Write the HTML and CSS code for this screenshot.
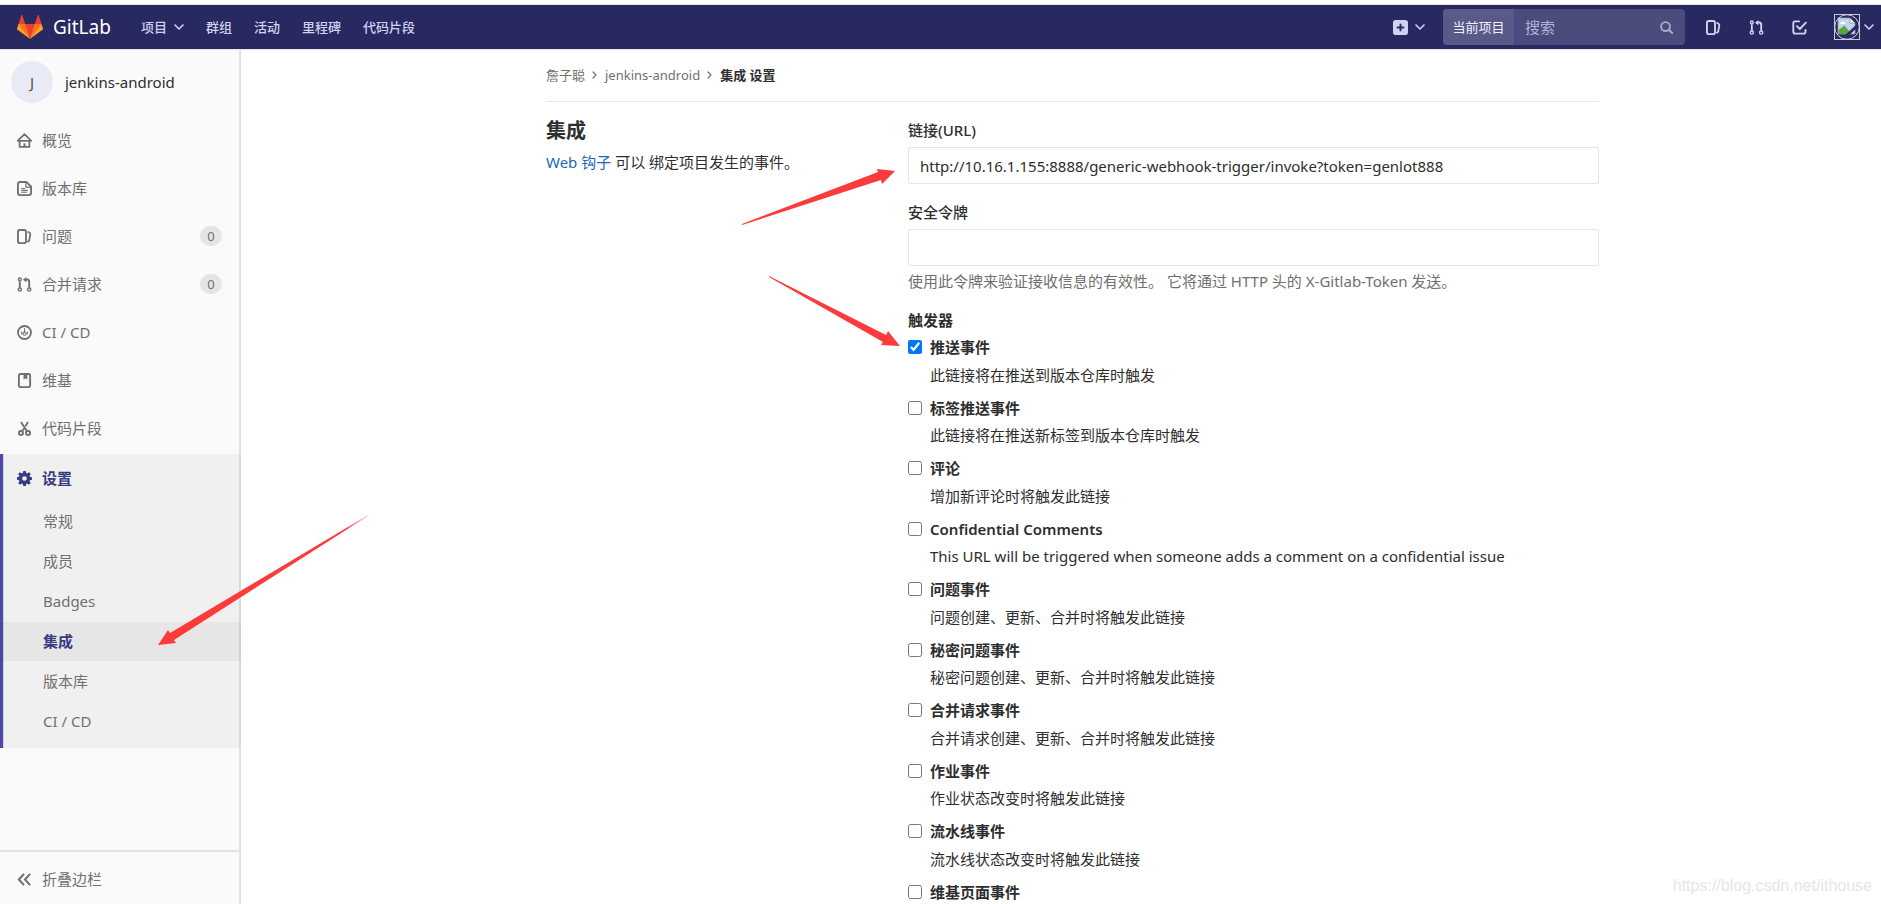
FILE: index.html
```html
<!DOCTYPE html>
<html lang="zh-CN">
<head>
<meta charset="utf-8">
<title>集成 设置 · jenkins-android · GitLab</title>
<link rel="stylesheet" href="styles.css">
</head>
<body>
<svg class="sprite" aria-hidden="true">
  <symbol id="chevron-down" viewBox="0 0 10 10"><path d="M1 3l4 4 4-4" fill="none" stroke="currentColor" stroke-width="1.6" stroke-linecap="round" stroke-linejoin="round"/></symbol>
  <symbol id="chevron-right" viewBox="0 0 10 10"><path d="M3 2l3 3-3 3" fill="none" stroke="currentColor" stroke-width="1.2" stroke-linecap="round" stroke-linejoin="round"/></symbol>
  <symbol id="issues" viewBox="0 0 16 16"><rect x="1" y="1" width="8.6" height="14" rx="2" fill="none" stroke="currentColor" stroke-width="2"/><path d="M12 3.2l1.3.7q1 .6.9 1.8l-1.200 6.600q-.2 1.100-1.400 1.200" fill="none" stroke="currentColor" stroke-width="1.900" stroke-linecap="round"/></symbol>
  <symbol id="merge" viewBox="0 0 16 16"><g fill="none" stroke="currentColor" stroke-width="1.500"><circle cx="3" cy="2.600" r="1.500"/><circle cx="3" cy="13.400" r="1.700"/><circle cx="13" cy="13.400" r="1.700"/></g><path d="M3 4.500v7M13 11.500V5q0-2.300-2.300-2.300H9" fill="none" stroke="currentColor" stroke-width="2"/><path d="M10 0v5.600L6.300 2.800z" fill="currentColor"/></symbol>
</svg>
<header class="navbar">
  <a class="brand" href="#">
    <svg class="logo" viewBox="0 0 36 36" aria-hidden="true"><path fill="#e24329" d="M2 14l9.38 9v-9l-4-12.28c-.205-.632-1.176-.632-1.38 0zM34 14l-9.38 9v-9l4-12.28c.205-.632 1.176-.632 1.38 0zM18 34.38L3 14h30z"/><path fill="#fc6d26" d="M18 34.38L11.38 14H2l4 11zM18 34.38L24.62 14H34l-4 11z"/><path fill="#fca326" d="M2 14L.1 20.16c-.18.565 0 1.2.5 1.56L18 34.38zM34 14l1.9 6.16c.18.565 0 1.2-.5 1.56L18 34.38z"/></svg>
    <span>GitLab</span>
  </a>
  <nav class="nav-links">
    <a href="#">项目 <svg class="chev"><use href="#chevron-down"/></svg></a>
    <a href="#">群组</a><a href="#">活动</a><a href="#">里程碑</a><a href="#">代码片段</a>
  </nav>
  <div class="nav-tools">
    <button class="tool" aria-label="新建"><svg class="icon" viewBox="0 0 16 16"><path fill="currentColor" fill-rule="evenodd" d="M3 0h10a3 3 0 0 1 3 3v10a3 3 0 0 1-3 3H3a3 3 0 0 1-3-3V3a3 3 0 0 1 3-3zm4 4v3H4v2h3v3h2V9h3V7H9V4z"/></svg><svg class="chev"><use href="#chevron-down"/></svg></button>
    <form class="search">
      <label for="search">当前项目</label>
      <input id="search" type="text" placeholder="搜索">
      <svg class="glass" viewBox="0 0 14 14"><circle cx="6" cy="6" r="4.8" fill="none" stroke="currentColor" stroke-width="2"/><path d="M9.500 9.500L13 13" stroke="currentColor" stroke-width="2.200" stroke-linecap="round"/></svg>
    </form>
    <div class="shortcuts">
      <a href="#" aria-label="问题"><svg class="icon"><use href="#issues"/></svg></a>
      <a href="#" aria-label="合并请求"><svg class="icon"><use href="#merge"/></svg></a>
      <a href="#" aria-label="待办"><svg class="icon" viewBox="0 0 16 16"><g fill="none" stroke="currentColor" stroke-width="2" stroke-linecap="round" stroke-linejoin="round"><path d="M7.500 1.500H3.400Q1.400 1.500 1.400 3.500v9q0 2 2 2h9q2 0 2-2v-2"/><path d="M5.300 6.600l3 3 6.500-6.800"/></g></svg></a>
    </div>
    <button class="tool user" aria-label="用户"><svg class="avatar-img" viewBox="0 0 26 26"><rect x=".5" y=".5" width="25" height="25" fill="none" stroke="#c8c8c8"/><path d="M4 4h12l5 5v11H4z" fill="#c2d4f4" stroke="#999" stroke-width=".8"/><path d="M4.500 20v-4l6-4.500 7 8.500z" fill="#57a837"/><path d="M6 10q1-3 3-2 2-1 2.500 2z" fill="#fff"/><path d="M16 4v5h5z" fill="#fff" stroke="#888" stroke-width=".7"/><path d="M11 21L22 11v4l-7 6z" fill="#292961"/><circle cx="13" cy="13" r="12.300" fill="none" stroke="#d1d1f0"/></svg><svg class="chev"><use href="#chevron-down"/></svg></button>
  </div>
</header>
<div class="layout">
  <aside class="sidebar">
    <a class="project" href="#"><span class="identicon">J</span><span>jenkins-android</span></a>
    <ul class="menu">
      <li><a href="#"><svg class="icon" viewBox="0 0 16 16"><g fill="none" stroke="currentColor" stroke-width="1.900" stroke-linejoin="round"><path d="M.8 8.300h14.400L8 1.200z"/><path d="M2.800 8.500v6.300h10.400V8.500"/><path d="M8 11v4" stroke-width="2.200"/></g></svg>概览</a></li>
      <li><a href="#"><svg class="icon" viewBox="0 0 16 16"><path d="M3.500 1H10l5 5v6.500q0 2.500-2.500 2.500h-9Q1 15 1 12.500v-9Q1 1 3.500 1z" fill="none" stroke="currentColor" stroke-width="2"/><path d="M9.500 1v5.500H15M4.500 8h4M4.500 10h7M4.500 12h6" fill="none" stroke="currentColor" stroke-width="1.200"/></svg>版本库</a></li>
      <li><a href="#"><svg class="icon"><use href="#issues"/></svg>问题<span class="count">0</span></a></li>
      <li><a href="#"><svg class="icon"><use href="#merge"/></svg>合并请求<span class="count">0</span></a></li>
      <li><a href="#"><svg class="icon" viewBox="0 0 16 16"><circle cx="8" cy="8" r="6.900" fill="none" stroke="currentColor" stroke-width="2"/><circle cx="8" cy="9.300" r="1.600" fill="none" stroke="currentColor" stroke-width="1.200"/><path d="M8 3.500V8M5 7v3M11 7v3" stroke="currentColor" stroke-width="1.200"/></svg>CI / CD</a></li>
      <li><a href="#"><svg class="icon" viewBox="0 0 16 16"><rect x="2" y="1" width="12" height="14" rx="2" fill="none" stroke="currentColor" stroke-width="2"/><path d="M7 1h4v6L9 5.500 7 7z" fill="currentColor"/></svg>维基</a></li>
      <li><a href="#"><svg class="icon" viewBox="0 0 16 16"><g fill="none" stroke="currentColor" stroke-width="2"><circle cx="4.200" cy="12.800" r="2.200"/><circle cx="11.800" cy="12.800" r="2.200"/><path d="M4.200 1l6.500 10M11.800 1L9 5.500M7.500 8L5.400 11"/></g></svg>代码片段</a></li>
    </ul>
    <div class="active-group">
      <a class="group-title" href="#"><svg class="icon" viewBox="0 0 16 16"><path fill="currentColor" fill-rule="evenodd" d="M6.700 0h2.600l.5 2.200 1 .4 2-1.300 1.900 1.900-1.300 2 .4 1 2.200.5v2.600l-2.200.5-.4 1 1.300 2-1.900 1.900-2-1.300-1 .4-.5 2.200H6.700l-.5-2.200-1-.4-2 1.300-1.900-1.900 1.300-2-.4-1L0 9.300V6.700l2.200-.5.4-1-1.300-2 1.900-1.900 2 1.300 1-.4zM8 5.500a2.500 2.500 0 1 0 0 5 2.500 2.500 0 0 0 0-5z"/></svg>设置</a>
      <ul class="submenu">
        <li><a href="#">常规</a></li><li><a href="#">成员</a></li><li><a href="#">Badges</a></li>
        <li><a class="current" href="#">集成</a></li><li><a href="#">版本库</a></li><li><a href="#">CI / CD</a></li>
      </ul>
    </div>
    <button class="collapse"><svg class="icon" viewBox="0 0 16 16"><path d="M7.500 2L2 8l5.500 6M14 2L8.500 8l5.500 6" fill="none" stroke="currentColor" stroke-width="2.200"/></svg>折叠边栏</button>
  </aside>
  <main class="main">
    <div class="container">
      <nav class="crumbs"><a href="#">詹子聪</a><svg class="sep"><use href="#chevron-right"/></svg><a href="#">jenkins-android</a><svg class="sep"><use href="#chevron-right"/></svg><strong>集成 设置</strong></nav>
      <div class="columns">
        <section>
          <h1>集成</h1>
          <p class="intro"><a href="#">Web 钩子</a> 可以 绑定项目发生的事件。</p>
        </section>
        <form class="hook">
          <div class="field"><label for="url">链接(URL)</label><input id="url" type="text" value="http://10.16.1.155:8888/generic-webhook-trigger/invoke?token=genlot888"></div>
          <div class="field"><label for="token">安全令牌</label><input id="token" type="text"><p class="help">使用此令牌来验证接收信息的有效性。 它将通过 HTTP 头的 X-Gitlab-Token 发送。</p></div>
          <fieldset>
            <legend>触发器</legend>
            <div class="trigger"><input type="checkbox" id="t1" checked><label for="t1">推送事件</label><p>此链接将在推送到版本仓库时触发</p></div>
            <div class="trigger"><input type="checkbox" id="t2"><label for="t2">标签推送事件</label><p>此链接将在推送新标签到版本仓库时触发</p></div>
            <div class="trigger"><input type="checkbox" id="t3"><label for="t3">评论</label><p>增加新评论时将触发此链接</p></div>
            <div class="trigger"><input type="checkbox" id="t4"><label for="t4">Confidential Comments</label><p>This URL will be triggered when someone adds a comment on a confidential issue</p></div>
            <div class="trigger"><input type="checkbox" id="t5"><label for="t5">问题事件</label><p>问题创建、更新、合并时将触发此链接</p></div>
            <div class="trigger"><input type="checkbox" id="t6"><label for="t6">秘密问题事件</label><p>秘密问题创建、更新、合并时将触发此链接</p></div>
            <div class="trigger"><input type="checkbox" id="t7"><label for="t7">合并请求事件</label><p>合并请求创建、更新、合并时将触发此链接</p></div>
            <div class="trigger"><input type="checkbox" id="t8"><label for="t8">作业事件</label><p>作业状态改变时将触发此链接</p></div>
            <div class="trigger"><input type="checkbox" id="t9"><label for="t9">流水线事件</label><p>流水线状态改变时将触发此链接</p></div>
            <div class="trigger"><input type="checkbox" id="t10"><label for="t10">维基页面事件</label></div>
          </fieldset>
        </form>
      </div>
    </div>
  </main>
</div>
<svg class="arrows" width="910" height="660" aria-hidden="true">
  <defs><linearGradient id="fade" gradientUnits="userSpaceOnUse" x1="367" y1="516" x2="345" y2="530"><stop offset="0" stop-color="#fc3b3a" stop-opacity="0.3"/><stop offset="1" stop-color="#fc3b3a"/></linearGradient></defs>
  <path fill="#fc3b3a" d="M742 224L878 172 877 169 895 171 882 184 881 180 742 225z"/>
  <path fill="#fc3b3a" d="M769 276L886 335 888 331 900 346 881 345 883 342 769 277z"/>
  <path fill="url(#fade)" d="M368 515L170 633 168 630 158 645 176 643 174 640 368 516z"/>
</svg>
<div class="watermark">https://blog.csdn.net/ithouse</div>
</body>
</html>
```
FILE: styles.css
```css
* { box-sizing: border-box; }
body {
  margin: 0;
  padding-top: 4px;
  height: 100vh;
  display: flex;
  flex-direction: column;
  overflow: hidden;
  position: relative;
  background: #fff;
  color: #2e2e2e;
  font: 15px/22px "Noto Sans", "Noto Sans CJK SC", sans-serif;
}
a { color: inherit; text-decoration: none; }
ul { list-style: none; margin: 0; padding: 0; }
p, h1 { margin: 0; }
button { border: 0; background: none; padding: 0; font: inherit; color: inherit; }
svg { flex: none; }
.sprite { position: absolute; width: 0; height: 0; }
.icon { width: 15px; height: 15px; }
.chev { width: 10px; height: 10px; }

.navbar {
  flex: none;
  height: 46px;
  display: flex;
  align-items: center;
  padding: 0 7px 0 17px;
  background: #292961;
  color: #d1d1f0;
  border-top: 1px solid #e5e5e5;
  border-bottom: 1px solid #e5e5e5;
}
.brand { display: flex; align-items: center; gap: 10px; color: #fff; font-size: 19px; }
.logo { width: 26px; height: 26px; }
.nav-links { display: flex; gap: 22px; margin-left: 30px; font-size: 13px; font-weight: 500; }
.nav-links a { display: flex; align-items: center; gap: 7px; }
.nav-tools { margin-left: auto; display: flex; align-items: center; }
.tool { display: flex; align-items: center; gap: 7px; }
.search {
  display: flex;
  align-items: center;
  width: 242px;
  height: 36px;
  margin: 0 21px 0 18px;
  padding-right: 12px;
  border-radius: 4px;
  overflow: hidden;
  background: #4c4c7c;
}
.search label {
  align-self: stretch;
  width: 72px;
  display: flex;
  align-items: center;
  justify-content: center;
  background: #5a5a88;
  border-right: 1px solid #41419f;
  color: #f0f0fa;
  font-size: 13px;
}
.search input { flex: 1; min-width: 0; border: 0; background: none; padding: 0 10px; font: inherit; color: #fff; }
.search input::placeholder { color: #b0b0d8; opacity: 1; }
.glass { width: 13px; height: 13px; color: #a9a9c9; }
.shortcuts { display: flex; gap: 28px; }
.shortcuts a { display: flex; }
.user { margin-left: 27px; gap: 4px; }
.avatar-img { width: 26px; height: 26px; }

.layout { flex: 1; min-height: 0; display: flex; }
.sidebar {
  width: 241px;
  flex: none;
  display: flex;
  flex-direction: column;
  background: #fafafa;
  color: #707070;
  box-shadow: inset -2px 0 0 #e2e2e2;
}
.project { display: flex; align-items: center; gap: 12px; padding: 11px; color: #2e2e2e; }
.identicon {
  width: 42px;
  height: 42px;
  border-radius: 50%;
  display: flex;
  align-items: center;
  justify-content: center;
  background: #e8eaf6;
  color: #555;
}
.menu a, .group-title { display: flex; align-items: center; gap: 10px; height: 48px; padding: 0 19px 0 17px; }
.menu { padding: 2px 0; }
.count {
  margin-left: auto;
  width: 22px;
  border-radius: 10px;
  background: #e5e5e5;
  text-align: center;
  font-size: 13px;
  line-height: 20px;
}
.active-group { background: rgba(0, 0, 0, 0.04); box-shadow: inset 3px 0 0 #4b4ba3, inset 4px 0 0 #d2d2ea; padding-bottom: 7px; }
.group-title { color: #393982; font-weight: 600; }
.submenu { display: grid; gap: 1px; }
.submenu a { display: block; padding-left: 43px; line-height: 39px; }
.submenu .current { background: rgba(0, 0, 0, 0.04); color: #393982; font-weight: 600; }
.collapse {
  margin-top: auto;
  height: 54px;
  display: flex;
  align-items: center;
  gap: 10px;
  padding: 2px 0 0 17px;
  border-top: 2px solid #e2e2e2;
}

.main { flex: 1; min-width: 0; overflow: hidden; padding-left: 23px; }
.container { max-width: 1053px; margin: 0 auto; }
.crumbs {
  display: flex;
  align-items: center;
  gap: 5px;
  height: 52px;
  padding-bottom: 2px;
  border-bottom: 1px solid #e5e5e5;
  font-size: 13px;
  color: #707070;
}
.crumbs strong { color: #2e2e2e; font-weight: 600; }
.sep { width: 10px; height: 10px; }
.columns { display: grid; grid-template-columns: 362px 1fr; padding-top: 17px; }
h1 { font-size: 20px; line-height: 24px; font-weight: 600; }
.intro { margin-top: 8px; }
.intro a { color: #1b69b6; }
.field { margin-bottom: 17px; }
.field label { display: block; margin-bottom: 6px; font-weight: 500; }
.field input {
  display: block;
  width: 100%;
  height: 37px;
  padding: 0 11px;
  border: 1px solid #e5e5e5;
  border-radius: 2px;
  background: #fff;
  color: #2e2e2e;
  font: inherit;
}
.help { margin-top: 4px; color: #707070; }
fieldset { border: 0; margin: 0; padding: 0; }
legend { padding: 0; margin-bottom: 5px; font-weight: 600; }
.trigger { display: grid; grid-template-columns: 22px 1fr; align-items: center; row-gap: 5px; margin-bottom: 11px; }
.trigger input { width: 14px; height: 14px; margin: 0; }
.trigger label { font-weight: 600; line-height: 1.5; }
.trigger p { grid-column: 2; }

.arrows { position: absolute; left: 0; top: 0; pointer-events: none; }
.watermark {
  position: absolute;
  right: 9px;
  bottom: 7px;
  color: #e6e6e6;
  font: 16px/22px "Liberation Sans", sans-serif;
}
```
